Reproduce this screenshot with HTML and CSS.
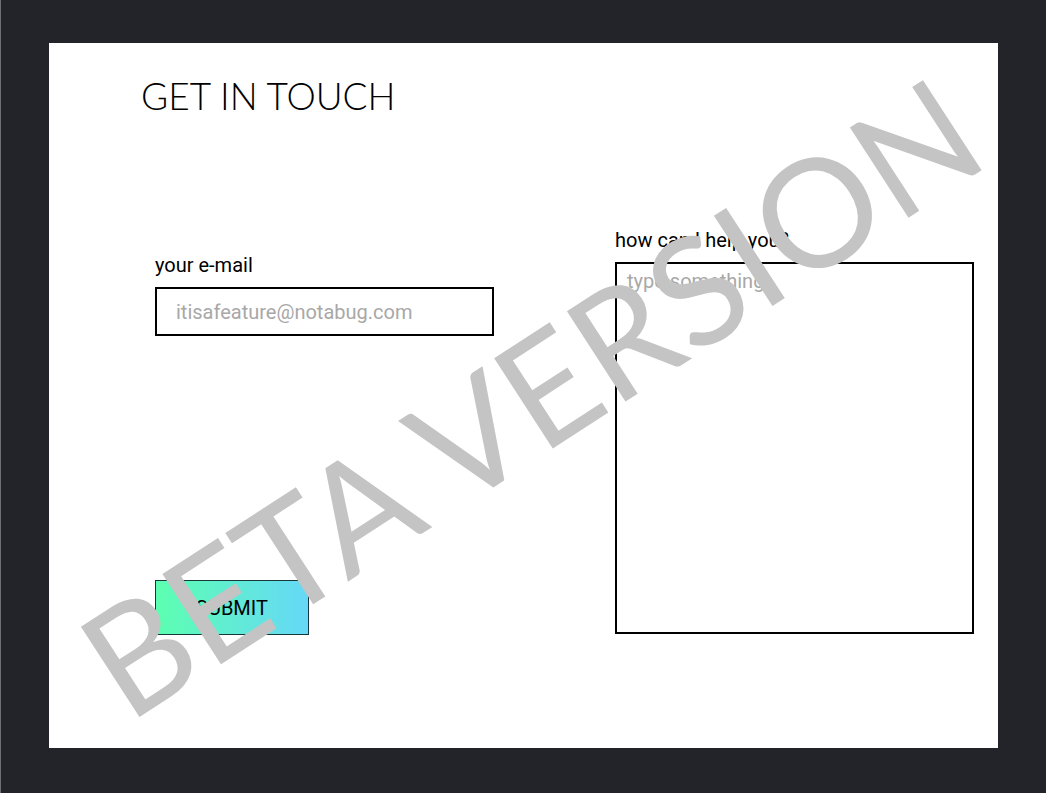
FILE: index.html
```html
<!DOCTYPE html>
<html lang="en">

<head>
    <meta charset="UTF-8">
    <title>Get in touch</title>
    <link rel="stylesheet" href="styles.css">
</head>

<body>
    <div class="card">
        <h1 class="title">GET IN TOUCH</h1>
        <form class="contact" action="javascript:;">
            <div class="col-left">
                <label class="label" for="mail">your e-mail</label>
                <input class="mail" id="mail" type="email" placeholder="itisafeature@notabug.com">
                <button class="submit" type="submit">SUBMIT</button>
            </div>
            <div class="col-right">
                <label class="label" for="msg">how can I help you?</label>
                <textarea class="msg" id="msg" placeholder="type something"></textarea>
            </div>
        </form>
        <div class="beta">BETA VERSION</div>
    </div>
</body>

</html>
```

FILE: styles.css
```css
* {
    padding: 0px;
    margin: 0px;
    box-sizing: border-box;
}

body {
    background: #232429;
    border-left: 1px solid #6f6f73;
    padding: 43px 48px 45px 48px;
    font-family: Roboto, "Liberation Sans", sans-serif;
}

.card {
    width: 949px;
    height: 705px;
    background: #fff;
    position: relative;
    padding-top: 30px;
}

.title {
    margin-left: 92px;
    font-family: Lato, "Open Sans", sans-serif;
    font-weight: 300;
    font-size: 37px;
    line-height: 46px;
    color: #000;
}

.contact {
    display: flex;
    margin-top: 109px;
    padding-left: 106px;
}

.col-left {
    width: 460px;
    padding-top: 25px;
    display: flex;
    flex-direction: column;
    align-items: flex-start;
}

.col-right {
    width: 359px;
    display: flex;
    flex-direction: column;
}

.label {
    display: block;
    font-size: 20px;
    line-height: 24px;
    color: #000;
    margin-bottom: 10px;
}

.mail {
    width: 339px;
    height: 49px;
    border: 2px solid #000;
    padding: 0 19px;
    font-family: Roboto, sans-serif;
    font-size: 20px;
    outline: none;
}

.msg {
    width: 359px;
    height: 372px;
    border: 2px solid #000;
    padding: 5px 10px;
    font-family: Roboto, sans-serif;
    font-size: 20px;
    line-height: 24px;
    resize: none;
    outline: none;
}

.mail::placeholder,
.msg::placeholder {
    color: #a8a8a8;
}

.submit {
    margin-top: 244px;
    width: 154px;
    height: 55px;
    border: 1px solid #17383a;
    background: linear-gradient(90deg, #5cffb0 0%, #66d8f8 100%);
    font-family: Roboto, sans-serif;
    font-size: 20px;
    color: #000;
}

/* watermark over the whole card */
.beta {
    position: absolute;
    left: 480px;
    top: 352px;
    transform: translate(-50%, -50%) rotate(-33deg);
    white-space: nowrap;
    font-family: Lato, "Open Sans", sans-serif;
    font-weight: 400;
    font-size: 150px;
    line-height: 1;
    color: #c4c4c4;
    pointer-events: none;
}
```
